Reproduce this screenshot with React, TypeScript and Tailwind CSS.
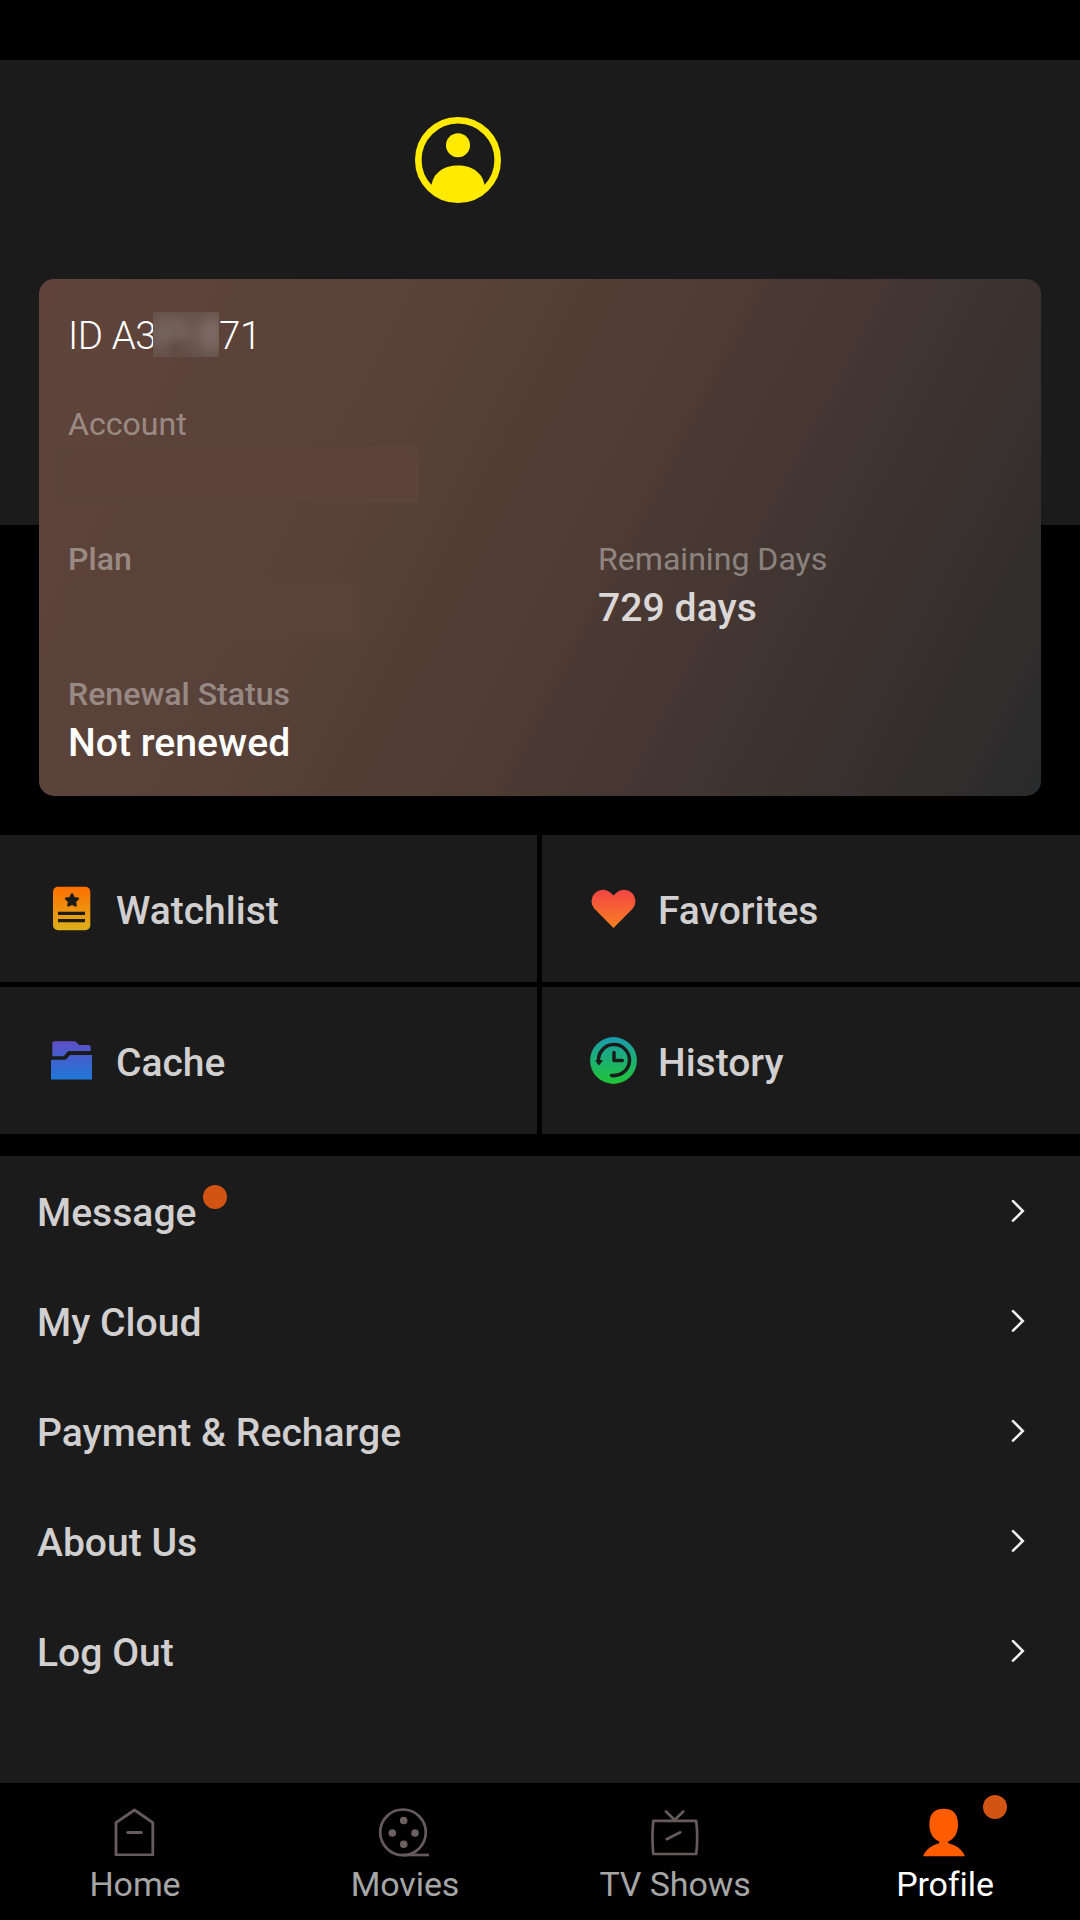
import type { ReactNode } from "react";

const tiles = [
  { label: "Watchlist", icon: <WatchlistIcon /> },
  { label: "Favorites", icon: <HeartIcon /> },
  { label: "Cache", icon: <FolderIcon /> },
  { label: "History", icon: <HistoryIcon /> },
];

const menu = [
  { label: "Message", unread: true },
  { label: "My Cloud" },
  { label: "Payment & Recharge" },
  { label: "About Us" },
  { label: "Log Out" },
];

const tabs = [
  { label: "Home", icon: <HomeIcon /> },
  { label: "Movies", icon: <ReelIcon /> },
  { label: "TV Shows", icon: <TvIcon /> },
  { label: "Profile", icon: <PersonIcon />, active: true, unread: true },
];

function AvatarIcon() {
  return (
    <svg width="86" height="86" viewBox="0 0 86 86">
      <circle cx="43" cy="43" r="39.7" fill="none" stroke="#ffea00" strokeWidth="6.6" />
      <circle cx="43" cy="28.3" r="12" fill="#ffea00" />
      <path d="M16.5 68.5C18 56 29 48.5 43 48.5S68 56 69.5 68.5A37 37 0 0 1 16.5 68.5Z" fill="#ffea00" />
      <path d="M16 67A36.5 36.5 0 0 0 70 67L66 76 43 84 20 76Z" fill="#ffea00" />
    </svg>
  );
}

function WatchlistIcon() {
  return (
    <svg width="47" height="47" viewBox="0 0 47 47">
      <defs>
        <linearGradient id="watch" x1="0" y1="0" x2="0" y2="1">
          <stop offset="0" stopColor="#ff6f00" />
          <stop offset="1" stopColor="#dcb01a" />
        </linearGradient>
      </defs>
      <rect x="5" y="1.7" width="37.3" height="43.6" rx="5" fill="url(#watch)" />
      <path
        d="M24 9.300l1.900 3.700 4.100.6-3 2.900.7 4.100-3.700-1.900-3.700 1.900.7-4.100-3-2.900 4.100-.6z"
        fill="#1b1b1b"
        stroke="#1b1b1b"
        strokeWidth="2.2"
        strokeLinejoin="round"
      />
      <path d="M10 28.400h27M10 35.600h27" stroke="#1b1b1b" strokeWidth="3.4" />
    </svg>
  );
}

function HeartIcon() {
  return (
    <svg width="47" height="47" viewBox="0 0 47 47">
      <defs>
        <linearGradient id="heart" x1="0" y1="0" x2="0" y2="1">
          <stop offset="0" stopColor="#f44545" />
          <stop offset="1" stopColor="#f98020" />
        </linearGradient>
      </defs>
      <path
        d="M23.5 43L4.2 23.600A11.500 11.500 0 0 1 20.4 7.400L23.5 10.600 26.6 7.400A11.500 11.500 0 0 1 42.8 23.600Z"
        fill="url(#heart)"
      />
    </svg>
  );
}

function FolderIcon() {
  return (
    <svg width="47" height="47" viewBox="0 0 47 47">
      <defs>
        <linearGradient id="folder" gradientUnits="userSpaceOnUse" x1="0" y1="4" x2="0" y2="43">
          <stop offset="0" stopColor="#5e4ec6" />
          <stop offset="1" stopColor="#1e78d6" />
        </linearGradient>
      </defs>
      <path
        d="M4.300 19.300V6.300Q4.300 4.300 6.300 4.300H26.200Q27.500 4.300 28.400 5.200L31.200 8H40.700Q42.700 8 42.700 10V14H21.500Q20 14 19 15.200L15.800 19.300Z"
        fill="url(#folder)"
      />
      <path d="M3 22.700H16.700Q18 22.700 18.800 21.700L21 19Q21.800 18 23 18H44V42.500H3Z" fill="url(#folder)" />
    </svg>
  );
}

function HistoryIcon() {
  return (
    <svg width="47" height="47" viewBox="0 0 47 47">
      <defs>
        <linearGradient id="history" x1="0" y1="0" x2="0" y2="1">
          <stop offset="0" stopColor="#1a9bad" />
          <stop offset="1" stopColor="#1fc535" />
        </linearGradient>
      </defs>
      <circle cx="23.5" cy="23.5" r="23.4" fill="url(#history)" />
      <g fill="none" stroke="#1b1b1b" strokeWidth="3.5" strokeLinecap="round">
        <path d="M8.600 25A15.500 15.500 0 1 1 21.500 38.400" />
        <path d="M24 15.500V23.400H32.300" strokeLinejoin="round" />
      </g>
      <path d="M5 23.300H13L9 28.500Z" fill="#1b1b1b" />
    </svg>
  );
}

function HomeIcon() {
  return (
    <svg width="48" height="48" viewBox="0 0 48 48" fill="none" stroke="#665a5a" strokeWidth="2.8">
      <path d="M5 47V14.700L23.500 2 41.800 14.700V47Z" strokeLinejoin="round" />
      <path d="M16.800 24.500H30.300" strokeWidth="3" strokeLinecap="round" />
    </svg>
  );
}

function ReelIcon() {
  return (
    <svg className="overflow-visible" width="48" height="48" viewBox="0 0 48 48" fill="none" stroke="#665a5a" strokeWidth="2.7">
      <circle cx="22" cy="24.3" r="22.8" />
      <path d="M22 47H48" />
      <g fill="#6d6060" stroke="none">
        <circle cx="22.7" cy="12.5" r="3.8" />
        <circle cx="22.7" cy="36.3" r="3.8" />
        <circle cx="11.3" cy="25" r="3.8" />
        <circle cx="34" cy="25" r="3.8" />
      </g>
    </svg>
  );
}

function TvIcon() {
  return (
    <svg width="48" height="48" viewBox="0 0 48 48" fill="none" stroke="#665a5a" strokeWidth="2.7" strokeLinecap="round" strokeLinejoin="round">
      <path d="M2.300 12.900H45.200Q47.200 29.500 45.200 46H2.300Q.6 29.500 2.300 12.900Z" />
      <path d="M15 3.500L23.700 12 32.300 3.500M15.700 31.200L29.300 24.300" />
    </svg>
  );
}

function PersonIcon() {
  return (
    <svg className="overflow-visible" width="48" height="48" viewBox="0 0 48 48">
      <path
        d="M22.700.7C31.500.7 37 5 37 16.500 37 24.500 34 30.500 27.200 33.500V35.300C34.500 37 41.500 41 43.900 48.300H2.100C4.500 41 11.500 37 18.200 35.300V33.500C11.400 30.500 8.400 24.500 8.400 16.500 8.400 5 14 .7 22.700.7Z"
        fill="#ff5c00"
      />
    </svg>
  );
}

function ChevronIcon() {
  return (
    <svg width="14" height="24" viewBox="0 0 14 24" fill="none" stroke="#f0f0f0" strokeWidth="2.6" strokeLinecap="round">
      <path d="M2 2.200L11.800 12 2 21.700" />
    </svg>
  );
}

function Field({ label, labelClass = "", children }: { label: string; labelClass?: string; children: ReactNode }) {
  return (
    <div className="h-[94px]">
      <div className={`text-[32.100px] leading-[40px] text-white/40 ${labelClass}`}>{label}</div>
      <div className="mt-1 text-[39.2px] leading-[50px] font-medium text-white">{children}</div>
    </div>
  );
}

export default function App() {
  return (
    <div className="w-[1080px] h-[1920px] bg-black flex flex-col overflow-hidden font-['Roboto',sans-serif]">
      {/* HEADER */}
      <header className="mt-[60px] h-[465px] shrink-0 bg-[#1b1b1b] pt-[57px] pl-[415px]">
        <AvatarIcon />
      </header>

      {/* ACCOUNT CARD */}
      <section className="relative mx-[39px] -mt-[246px] h-[517px] shrink-0 rounded-[15px] px-[29px] pt-[33px] bg-[linear-gradient(117.3deg,#60443b_0%,#594239_27%,#543f36_42%,#4f3c34_53%,#463732_65%,#3b322f_79%,#292a2b_100%)]">
        <div className="flex h-[46px] text-[38.5px] leading-[47px] font-light tracking-[-0.4px] text-white">
          <span className="w-[85px] whitespace-nowrap">ID A3</span>
          {/* masked digits */}
          <span className="relative h-[45px] w-[66px] overflow-hidden bg-[#65514a]">
            <span className="absolute -left-1 top-1.5 h-8 w-11 rounded-full bg-[#74635c] blur-[7px]" />
            <span className="absolute left-[46px] top-1 h-9 w-6 rounded-full bg-[#7d6b65] blur-[7px]" />
            <span className="absolute left-[14px] top-[28px] h-5 w-5 rounded-full bg-[#5e4941] blur-[6px]" />
          </span>
          <span>71</span>
        </div>

        <div className="mt-[46px] grid grid-cols-[530px_1fr] gap-y-[41px]">
          <div className="col-span-2">
            <Field label="Account">
              <div className="-mt-0.5 -ml-2 h-[57px] w-[359px] border-[5px] border-[#59433a] bg-[#5c4238]" />
            </Field>
          </div>
          <Field label="Plan" labelClass="font-medium">
            <div className="-ml-1 h-[56px] w-[295px] bg-[#59423a]" />
          </Field>
          <Field label="Remaining Days">
            <span className="text-[#dbd7d6]">729 days</span>
          </Field>
          <Field label="Renewal Status" labelClass="font-medium">
            Not renewed
          </Field>
        </div>
      </section>

      {/* SHORTCUTS */}
      <section className="mt-[39px] grid shrink-0 grid-cols-[537px_538px] gap-[5px]">
        {tiles.map((tile) => (
          <div key={tile.label} className="flex h-[147px] items-center gap-[21px] bg-[#1b1b1b] pl-12">
            {tile.icon}
            <span className="pt-1 text-[39px] leading-[50px] font-medium text-[#d1cfcf]">{tile.label}</span>
          </div>
        ))}
      </section>

      {/* MENU */}
      <section className="mt-[22px] flex-1 bg-[#1b1b1b]">
        {menu.map((item) => (
          <div key={item.label} className="flex h-[110px] items-center justify-between pr-[55px] pl-[37px]">
            <span className="relative pt-1 text-[39.1px] leading-[50px] font-medium text-[#d1cfcf]">
              {item.label}
              {item.unread && <span className="absolute -right-[31px] top-[1px] size-6 rounded-full bg-[#d15413]" />}
            </span>
            <ChevronIcon />
          </div>
        ))}
      </section>

      {/* BOTTOM TABS */}
      <nav className="grid h-[137px] shrink-0 grid-cols-4 pt-[25px]">
        {tabs.map((tab) => (
          <div key={tab.label} className="relative flex flex-col items-center">
            {tab.icon}
            <span className={`mt-2 text-[34px] leading-[40px] tracking-[-0.1px] ${tab.active ? "text-white" : "text-[#a6a6a6]"}`}>
              {tab.label}
            </span>
            {tab.unread && <span className="absolute left-[173px] -top-[13px] size-6 rounded-full bg-[#d15413]" />}
          </div>
        ))}
      </nav>
    </div>
  );
}
